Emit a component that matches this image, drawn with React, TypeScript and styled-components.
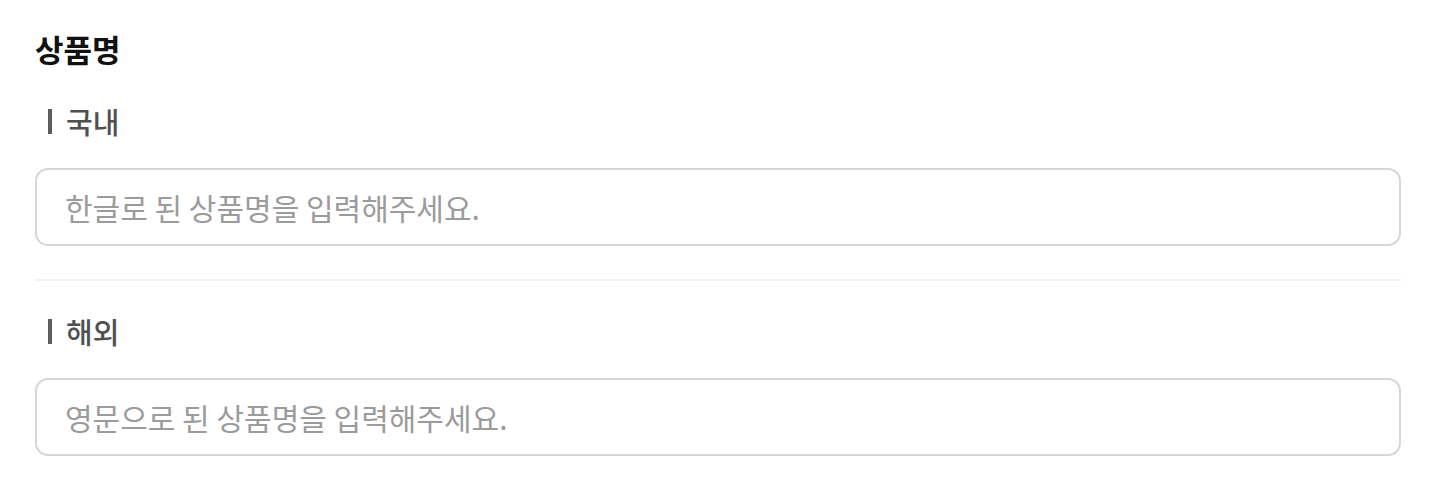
import React from "react";
import styled, { createGlobalStyle } from "styled-components";

const GlobalStyle = createGlobalStyle`
  body {
    margin: 0;
    background: #ffffff;
    font-family: "Noto Sans CJK KR", "Noto Sans", sans-serif;
  }
`;

const Page = styled.div`
  display: flex;
  flex-direction: column;
  padding: 27px 31px 0 35px;
`;

const Title = styled.h2`
  margin: 0;
  font-size: 31px;
  font-weight: 700;
  line-height: 44px;
  color: #111111;
`;

const Section = styled.div`
  display: flex;
  flex-direction: column;
  gap: 27px;
  padding: 30px 0 33px;
`;

const SubTitle = styled.div`
  display: flex;
  align-items: center;
  gap: 14px;
  padding-left: 13px;
  font-size: 29px;
  font-weight: 500;
  line-height: 40px;
  color: #505050;

  &::before {
    content: "";
    width: 4px;
    height: 25px;
    background: #5e5e5e;
  }
`;

const Input = styled.input`
  box-sizing: border-box;
  width: 100%;
  height: 78px;
  padding: 0 28px;
  border: 2px solid #d6d6d6;
  border-radius: 13px;
  font-family: inherit;
  font-size: 30px;
  color: #333333;
  outline: none;
  background: #ffffff;

  &::placeholder {
    color: #9b9b9b;
  }
`;

const Divider = styled.hr`
  margin: 0;
  border: none;
  height: 2px;
  background: #f3f3f3;
`;

interface FieldProps {
  readonly label: string;
  readonly placeholder: string;
}
function Field({ label, placeholder }: FieldProps) {
  return <Section>
    <SubTitle>{label}</SubTitle>
    <Input placeholder={placeholder} />
  </Section>;
}

export default function App() {
  return <>
    <GlobalStyle />
    <Page>
      <Title>상품명</Title>
      <Field label="국내" placeholder="한글로 된 상품명을 입력해주세요." />
      <Divider />
      <Field label="해외" placeholder="영문으로 된 상품명을 입력해주세요." />
    </Page>
  </>;
}
